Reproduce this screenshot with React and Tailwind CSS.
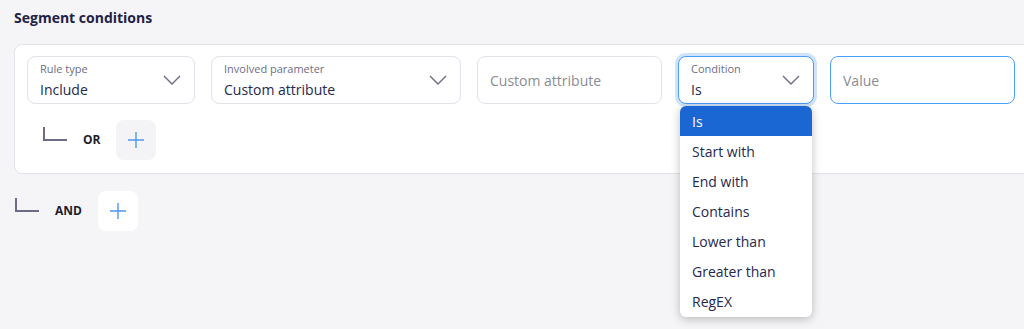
import React from 'react';

const Chevron = () => (
  <svg className="w-[20px] h-[12px] text-[#6b6d85]" viewBox="0 0 20 12" fill="none">
    <path d="M2 2l8 8 8-8" stroke="currentColor" strokeWidth="1.4" />
  </svg>
);

const Corner = () => (
  <svg className="w-[24px] h-[14px] text-[#6b6b88]" viewBox="0 0 24 14" fill="none">
    <path d="M1 0v13h23" stroke="currentColor" strokeWidth="2" />
  </svg>
);

const Plus = () => (
  <svg className="w-[18px] h-[18px] text-[#4d97f0]" viewBox="0 0 18 18" fill="none">
    <path d="M9 1v16M1 9h16" stroke="currentColor" strokeWidth="1.4" />
  </svg>
);

const SelectField = ({ label, value, width, focused }) => (
  <div
    className={`h-[48px] rounded-lg bg-white flex items-center justify-between pl-3 pr-3 ${width} ${
      focused ? 'border border-[#4a9cf7] ring-[3px] ring-[#cfe3fb]' : 'border border-[#e2e2ea]'
    }`}
  >
    <div className="flex flex-col pt-[2px]">
      <span className="text-[11px] leading-[14px] text-[#6d6e86]">{label}</span>
      <span className="text-[14px] leading-[20px] mt-[4px] text-[#262850]">{value}</span>
    </div>
    <Chevron />
  </div>
);

const options = ['Is', 'Start with', 'End with', 'Contains', 'Lower than', 'Greater than', 'RegEX'];

export default function App() {
  return (
    <div
      className="w-[1024px] h-[329px] bg-[#f5f5f8] overflow-hidden"
      style={{ fontFamily: '"Open Sans", "Noto Sans", sans-serif' }}
    >
      <div className="pl-[14px] pt-[9px] text-[14px] leading-[18px] font-bold text-[#1f2247]">Segment conditions</div>

      <div className="ml-[14px] mt-[17px] w-[1030px] bg-white border border-[#e2e2ea] rounded-lg pl-3 pt-[11px] pb-[13px]">
        <div className="flex gap-4">
          <SelectField label="Rule type" value="Include" width="w-[168px]" />
          <SelectField label="Involved parameter" value="Custom attribute" width="w-[250px]" />
          <div className="h-[48px] w-[185px] rounded-lg border border-[#e2e2ea] bg-white flex items-center px-3 text-[14px] text-[#8b8b93]">
            Custom attribute
          </div>
          <div className="relative">
            <SelectField label="Condition" value="Is" width="w-[136px]" focused />
            <div className="absolute left-[2px] top-[50px] w-[132px] bg-white rounded-md shadow-[0_2px_10px_rgba(0,0,0,0.25)] overflow-hidden z-10 pb-[1px]">
              {options.map((o, i) => (
                <div
                  key={o}
                  className={`h-[30px] flex items-center px-3 text-[14px] ${
                    i === 0 ? 'bg-[#1a66d3] text-white' : 'text-[#262850]'
                  }`}
                >
                  {o}
                </div>
              ))}
            </div>
          </div>
          <div className="h-[48px] w-[185px] rounded-lg border border-[#4aa0fb] bg-white flex items-center px-3 text-[14px] text-[#8b8b93]">
            Value
          </div>
        </div>

        <div className="flex items-center mt-4 pl-[16px]">
          <div className="mt-[-12px]"><Corner /></div>
          <span className="ml-[16px] text-[12px] font-bold text-[#1e1e2a]">OR</span>
          <button className="ml-[16px] w-[40px] h-[40px] rounded-lg bg-[#f4f4f7] flex items-center justify-center">
            <Plus />
          </button>
        </div>
      </div>

      <div className="flex items-center mt-[17px] pl-[15px]">
        <div className="mt-[-12px]"><Corner /></div>
        <span className="ml-[16px] text-[12px] font-bold text-[#1e1e2a]">AND</span>
        <button className="ml-[16px] w-[40px] h-[40px] rounded-lg bg-white flex items-center justify-center">
          <Plus />
        </button>
      </div>
    </div>
  );
}
